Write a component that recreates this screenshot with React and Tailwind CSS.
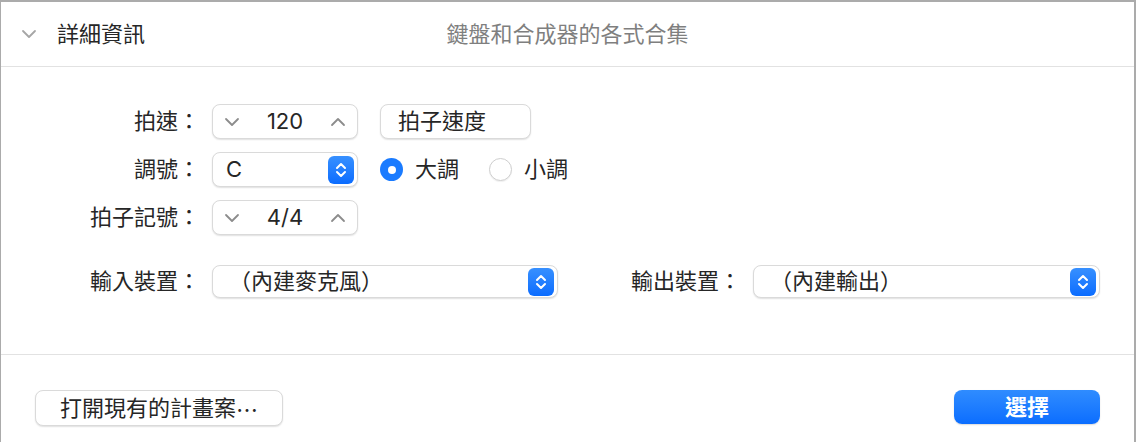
const font = { fontFamily: '"Inter", "Noto Sans CJK TC", sans-serif' };

const ChevronDown = ({ className = "" }) => (
  <svg width="16" height="10" viewBox="0 0 16 10" className={className}>
    <polyline points="2,2 8,8 14,2" fill="none" stroke="currentColor" strokeWidth="1.8" strokeLinecap="round" strokeLinejoin="round" />
  </svg>
);

const ChevronUp = ({ className = "" }) => (
  <svg width="16" height="10" viewBox="0 0 16 10" className={className}>
    <polyline points="2,8 8,2 14,8" fill="none" stroke="currentColor" strokeWidth="1.8" strokeLinecap="round" strokeLinejoin="round" />
  </svg>
);

const UpDown = () => (
  <div className="w-[26px] h-[28px] rounded-[6px] bg-gradient-to-b from-[#3790ff] to-[#0a6cff] flex items-center justify-center">
    <svg width="12" height="18" viewBox="0 0 12 18">
      <polyline points="2,7 6,3 10,7" fill="none" stroke="white" strokeWidth="2" strokeLinecap="round" strokeLinejoin="round" />
      <polyline points="2,11 6,15 10,11" fill="none" stroke="white" strokeWidth="2" strokeLinecap="round" strokeLinejoin="round" />
    </svg>
  </div>
);

const box = "bg-white border border-[#dadada] rounded-[8px] shadow-[0_1px_1.5px_rgba(0,0,0,0.12)]";

const Stepper = ({ value }) => (
  <div className={`${box} ml-3 w-[146px] h-[35px] flex items-center justify-between px-[11px] text-[#8c8c8c]`}>
    <ChevronDown />
    <span className="text-[#262626] text-[22px]">{value}</span>
    <ChevronUp />
  </div>
);

const Label = ({ children, className = "" }) => (
  <div className={`text-right text-[22px] text-[#262626] ${className}`}>{children}</div>
);

const Radio = ({ checked, label }) => (
  <div className="flex items-center gap-[12px]">
    {checked ? (
      <div className="w-[23px] h-[23px] rounded-full bg-[#1a7bff] flex items-center justify-center">
        <div className="w-[8px] h-[8px] rounded-full bg-white" />
      </div>
    ) : (
      <div className="w-[23px] h-[23px] rounded-full bg-white border border-[#cfcfcf] shadow-[0_1px_1px_rgba(0,0,0,0.06)]" />
    )}
    <span className="text-[22px] text-[#262626]">{label}</span>
  </div>
);

export default function App() {
  return (
    <div style={font} className="w-[1136px] h-[442px] bg-white border-t-2 border-l border-r-2 border-[#ababab] flex flex-col">
      {/* 標題列 */}
      <div className="h-[65px] grid grid-cols-[1fr_auto_1fr] items-center border-b border-[#e2e2e2]">
        <div className="flex items-center pl-[20px] gap-[20px]">
          <ChevronDown className="text-[#a6a6a6]" />
          <span className="text-[22px] text-[#262626]">詳細資訊</span>
        </div>
        <div className="text-[22px] text-[#7f7f7f]">鍵盤和合成器的各式合集</div>
        <div />
      </div>

      {/* 內容 */}
      <div className="h-[288px] border-b border-[#e2e2e2] pt-[37px] flex flex-col">
        <div className="flex flex-col gap-[13px]">
          <div className="flex items-center">
            <Label className="w-[199px]">拍速：</Label>
            <Stepper value="120" />
            <div className={`${box} ml-[22px] w-[151px] h-[35px] flex items-center px-[17px] text-[22px] text-[#262626]`}>
              拍子速度
            </div>
          </div>
          <div className="flex items-center">
            <Label className="w-[199px]">調號：</Label>
            <div className={`${box} ml-3 w-[146px] h-[35px] flex items-center justify-between pl-[13px] pr-[3px]`}>
              <span className="text-[22px] text-[#262626]">C</span>
              <UpDown />
            </div>
            <div className="ml-[22px] flex items-center gap-[30px]">
              <Radio checked label="大調" />
              <Radio label="小調" />
            </div>
          </div>
          <div className="flex items-center">
            <Label className="w-[199px]">拍子記號：</Label>
            <Stepper value="4/4" />
          </div>
        </div>

        <div className="flex items-center mt-[30px]">
          <Label className="w-[199px]">輸入裝置：</Label>
          <div className={`${box} ml-3 w-[346px] h-[33px] flex items-center justify-between pl-[16px] pr-[3px]`}>
            <span className="text-[22px] text-[#262626]">（內建麥克風）</span>
            <UpDown />
          </div>
          <Label className="ml-[73px]">輸出裝置：</Label>
          <div className={`${box} ml-[12px] w-[347px] h-[33px] flex items-center justify-between pl-[16px] pr-[3px]`}>
            <span className="text-[22px] text-[#262626]">（內建輸出）</span>
            <UpDown />
          </div>
        </div>
      </div>

      {/* 底部按鈕 */}
      <div className="flex-1 flex items-start justify-between pt-[35px] pl-[34px] pr-[34px]">
        <button className={`${box} w-[248px] h-[36px] text-[22px] text-[#262626] flex items-center justify-center`}>
          打開現有的計畫案<span style={{ fontFamily: '"Noto Sans CJK TC", sans-serif' }}>⋯</span>
        </button>
        <button className="w-[146px] h-[34px] rounded-[8px] bg-gradient-to-b from-[#2f8cff] to-[#0a6dff] text-white text-[22px] font-semibold flex items-center justify-center shadow-[0_1px_1.5px_rgba(0,0,0,0.15)]">
          選擇
        </button>
      </div>
    </div>
  );
}
